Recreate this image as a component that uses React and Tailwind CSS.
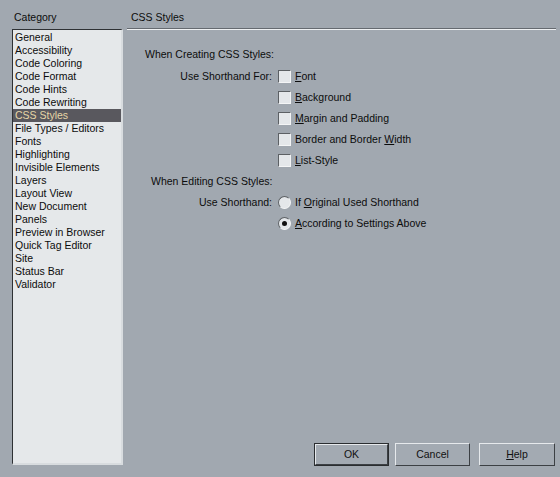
import React, { useState } from 'react';

const categories = [
	'General', 'Accessibility', 'Code Coloring', 'Code Format', 'Code Hints', 'Code Rewriting',
	'CSS Styles', 'File Types / Editors', 'Fonts', 'Highlighting', 'Invisible Elements', 'Layers',
	'Layout View', 'New Document', 'Panels', 'Preview in Browser', 'Quick Tag Editor', 'Site',
	'Status Bar', 'Validator',
];

// label text with one underlined access key
function Key({ pre = '', k, post = '' }) {
	return <span>{pre}<span className="underline underline-offset-[1px]">{k}</span>{post}</span>;
}

function Check({ checked, onChange, children }) {
	return (
		<label className="flex items-center gap-[4px] cursor-default">
			<span onClick={onChange} className="w-[13px] h-[13px] bg-[#e4e7ea] border-t border-l border-t-[#5c6064] border-l-[#5c6064] border-b border-r border-b-[#f4f5f6] border-r-[#f4f5f6] flex items-center justify-center text-[10px] leading-none">
				{checked ? '✓' : ''}
			</span>
			{children}
		</label>
	);
}

function Radio({ checked, onChange, children }) {
	return (
		<label className="flex items-center gap-[4px] cursor-default" onClick={onChange}>
			<span className="w-[13px] h-[13px] rounded-full bg-[#e4e7ea] border border-t-[#5c6064] border-l-[#5c6064] border-b-[#f4f5f6] border-r-[#f4f5f6] flex items-center justify-center">
				{checked && <span className="w-[5px] h-[5px] rounded-full bg-[#111]" />}
			</span>
			{children}
		</label>
	);
}

function Button({ children, primary, width = 'w-[75px]' }) {
	return (
		<button className={`${width} h-[23px] bg-[#a3aab2] text-[#111] flex items-center justify-center ${primary ? 'border border-[#2a2d30]' : ''}`}>
			<span className="w-full h-full flex items-center justify-center border-t border-l border-t-[#e6e9ec] border-l-[#e6e9ec] border-b border-r border-b-[#3c4044] border-r-[#3c4044]">
				{children}
			</span>
		</button>
	);
}

export default function App() {
	const [selected, setSelected] = useState('CSS Styles');
	const [opts, setOpts] = useState({ font: false, background: false, margin: false, border: false, list: false });
	const [editMode, setEditMode] = useState('settings');
	const toggle = (k) => setOpts(o => ({ ...o, [k]: !o[k] }));

	return (
		<div className="w-[560px] h-[477px] bg-[#a1a8b0] flex text-[10.5px] leading-[13px] text-[#0c0c0c] overflow-hidden" style={{ fontFamily: '"Liberation Sans", Arial, sans-serif' }}>
			<div className="w-[111px] shrink-0 ml-[12px] pt-[11px] pb-[12px] flex flex-col">
				<div className="h-[18px] pl-[2px]">Category</div>
				<div className="flex-1 bg-[#e5e8ea] border-t border-l border-t-[#2e3134] border-l-[#2e3134] border-b-2 border-r-2 border-b-[#d8dcdf] border-r-[#d8dcdf] pt-[1px]">
					{categories.map(c => (
						<div
							key={c}
							onClick={() => setSelected(c)}
							className={`h-[13px] pl-[2px] whitespace-nowrap cursor-default ${selected === c ? 'bg-[#59585e] text-[#e6d6a6]' : ''}`}
						>
							{c}
						</div>
					))}
				</div>
			</div>

			<div className="flex-1 ml-[4px] mr-[4px] pt-[11px] pb-[11px] flex flex-col">
				<div className="h-[17px] pl-[4px]">CSS Styles</div>
				<div className="border-t border-t-[#656a70] border-b border-b-[#eef0f2]" />

				<div className="mt-[14px] flex flex-col">
					<div className="h-[21px] flex items-center pl-[18px]">When Creating CSS Styles:</div>
					<div className="h-[22px] flex items-center">
						<div className="w-[151px] text-right pr-[6px]">Use Shorthand For:</div>
						<Check checked={opts.font} onChange={() => toggle('font')}><Key k="F" post="ont" /></Check>
					</div>
					<div className="h-[21px] flex items-center pl-[151px]">
						<Check checked={opts.background} onChange={() => toggle('background')}><Key k="B" post="ackground" /></Check>
					</div>
					<div className="h-[21px] flex items-center pl-[151px]">
						<Check checked={opts.margin} onChange={() => toggle('margin')}><Key k="M" post="argin and Padding" /></Check>
					</div>
					<div className="h-[21px] flex items-center pl-[151px]">
						<Check checked={opts.border} onChange={() => toggle('border')}><Key pre="Border and Border " k="W" post="idth" /></Check>
					</div>
					<div className="h-[21px] flex items-center pl-[151px]">
						<Check checked={opts.list} onChange={() => toggle('list')}><Key k="L" post="ist-Style" /></Check>
					</div>
					<div className="h-[21px] flex items-center pl-[24px]">When Editing CSS Styles:</div>
					<div className="h-[21px] flex items-center">
						<div className="w-[151px] text-right pr-[6px]">Use Shorthand:</div>
						<Radio checked={editMode === 'original'} onChange={() => setEditMode('original')}><Key pre="If " k="O" post="riginal Used Shorthand" /></Radio>
					</div>
					<div className="h-[21px] flex items-center pl-[151px]">
						<Radio checked={editMode === 'settings'} onChange={() => setEditMode('settings')}><Key k="A" post="ccording to Settings Above" /></Radio>
					</div>
				</div>

				<div className="flex-1" />
				<div className="flex justify-end pr-[1px]">
					<Button primary width="w-[75px]">OK</Button>
					<div className="w-[6px]" />
					<Button width="w-[75px]">Cancel</Button>
					<div className="w-[9px]" />
					<Button width="w-[76px]"><Key k="H" post="elp" /></Button>
				</div>
			</div>
		</div>
	);
}
